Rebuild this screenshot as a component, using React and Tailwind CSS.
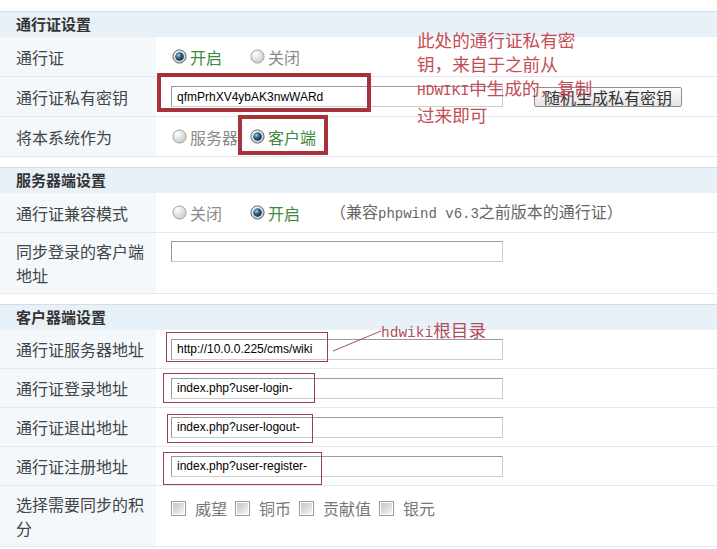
import React from "react";

// Small radio glyph in the old Windows style
function Radio({ checked }) {
  return (
    <svg width="15" height="15" viewBox="0 0 15 15" className="shrink-0">
      <defs>
        <radialGradient id="radioFace" cx="35%" cy="30%" r="75%">
          <stop offset="0%" stopColor="#ffffff" />
          <stop offset="100%" stopColor="#c9c9c9" />
        </radialGradient>
        <radialGradient id="radioDot" cx="38%" cy="35%" r="70%">
          <stop offset="0%" stopColor="#a8d0e8" />
          <stop offset="45%" stopColor="#2f6585" />
          <stop offset="100%" stopColor="#0d2a3e" />
        </radialGradient>
      </defs>
      <circle
        cx="7.5"
        cy="7.5"
        r="6.6"
        fill="url(#radioFace)"
        stroke={checked ? "#55697a" : "#a6a6a6"}
        strokeWidth="1"
      />
      {checked && <circle cx="7.5" cy="7.5" r="4.3" fill="url(#radioDot)" />}
    </svg>
  );
}

function Checkbox() {
  return (
    <svg width="15" height="15" viewBox="0 0 15 15" className="shrink-0">
      <defs>
        <linearGradient id="boxFace" x1="0" y1="0" x2="1" y2="1">
          <stop offset="0%" stopColor="#c4c4c4" />
          <stop offset="100%" stopColor="#f6f6f6" />
        </linearGradient>
      </defs>
      <rect x="0.5" y="0.5" width="14" height="14" fill="#ffffff" stroke="#9c9c9c" />
      <rect x="2" y="2" width="11" height="11" fill="url(#boxFace)" />
    </svg>
  );
}

function Option({ checked, children }) {
  return (
    <div className="flex items-center w-[78px]">
      <Radio checked={checked} />
      <span
        className={
          "ml-[3px] text-[16px] leading-[20px] " +
          (checked ? "text-[#3b8a3b]" : "text-[#8a8a8a]")
        }
      >
        {children}
      </span>
    </div>
  );
}

function TextBox({ value = "" }) {
  return (
    <input
      readOnly
      value={value}
      className="w-[332px] h-[21px] border border-[#cdcdcd] border-t-[#9a9a9a] border-l-[#9a9a9a] bg-white px-[5px] text-[12px] text-black font-['Liberation_Sans',sans-serif] outline-none"
    />
  );
}

function Header({ title }) {
  return (
    <div className="h-[26px] border-t border-[#d3dde8] bg-[#e8f0f8] flex items-center pl-[16px] text-[15px] font-bold text-[#333]">
      {title}
    </div>
  );
}

function Row({ label, height, top, children }) {
  return (
    <div className={"flex border-b border-[#e3e8ee] " + height}>
      <div className="w-[156px] shrink-0 bg-[#f4f8fb] pl-[16px] pr-[6px] flex items-center text-[16px] leading-[24px] text-[#444]">
        {label}
      </div>
      <div
        className={
          "flex-1 flex pl-[15px] " + (top ? "items-start " + top : "items-center")
        }
      >
        {children}
      </div>
    </div>
  );
}

export default function App() {
  return (
    <div className="relative w-[717px] h-[549px] overflow-hidden bg-white font-['Noto_Sans_CJK_SC',sans-serif]">
      <div className="h-[11px]" />

      {/* 通行证设置 */}
      <Header title="通行证设置" />
      <Row label="通行证" height="h-[40px]">
        <div className="flex items-center ml-[1px]">
          <Option checked>开启</Option>
          <Option>关闭</Option>
        </div>
      </Row>
      <Row label="通行证私有密钥" height="h-[40px]">
        <TextBox value="qfmPrhXV4ybAK3nwWARd" />
        <button className="ml-[31px] h-[20px] w-[148px] border border-[#8d8d8d] rounded-[2px] bg-gradient-to-b from-[#fdfdfd] to-[#e4e4e4] text-[16px] leading-none text-[#333]">
          随机生成私有密钥
        </button>
      </Row>
      <Row label="将本系统作为" height="h-[40px]">
        <div className="flex items-center ml-[1px]">
          <Option>服务器</Option>
          <Option checked>客户端</Option>
        </div>
      </Row>

      <div className="h-[10px]" />

      {/* 服务器端设置 */}
      <Header title="服务器端设置" />
      <Row label="通行证兼容模式" height="h-[40px]">
        <div className="flex items-center ml-[1px]">
          <Option>关闭</Option>
          <Option checked>开启</Option>
          <span className="ml-[2px] text-[16px] leading-[20px] text-[#666]">
            （兼容
            <span className="font-['Liberation_Mono',monospace] text-[14px]">
              phpwind v6.3
            </span>
            之前版本的通行证）
          </span>
        </div>
      </Row>
      <Row label="同步登录的客户端地址" height="h-[61px]" top="pt-[8px]">
        <TextBox />
      </Row>

      <div className="h-[10px]" />

      {/* 客户器端设置 */}
      <Header title="客户器端设置" />
      <Row label="通行证服务器地址" height="h-[39px]">
        <TextBox value="http://10.0.0.225/cms/wiki" />
      </Row>
      <Row label="通行证登录地址" height="h-[39px]">
        <TextBox value="index.php?user-login-" />
      </Row>
      <Row label="通行证退出地址" height="h-[39px]">
        <TextBox value="index.php?user-logout-" />
      </Row>
      <Row label="通行证注册地址" height="h-[39px]">
        <TextBox value="index.php?user-register-" />
      </Row>
      <Row label="选择需要同步的积分" height="h-[61px]" top="pt-[14px]">
        <div className="flex items-center gap-[8px] text-[16px] leading-[16px] text-[#777]">
          {["威望", "铜币", "贡献值", "银元"].map((t) => (
            <div key={t} className="flex items-center gap-[9px]">
              <Checkbox />
              <span>{t}</span>
            </div>
          ))}
        </div>
      </Row>

      {/* hand-drawn markup laid over the form */}
      <div className="absolute left-[157px] top-[73px] w-[214px] h-[39px] border-[4px] border-[#a8323c]" />
      <div className="absolute left-[238px] top-[115px] w-[90px] h-[40px] border-[4px] border-[#a8323c]" />

      <div className="absolute left-[166px] top-[332px] w-[162px] h-[30px] border-[1.5px] border-[#9b4050]" />
      <div className="absolute left-[163px] top-[373px] w-[152px] h-[30px] border-[1.5px] border-[#9b4050]" />
      <div className="absolute left-[167px] top-[414px] w-[146px] h-[29px] border-[1.5px] border-[#9b4050]" />
      <div className="absolute left-[163px] top-[452px] w-[159px] h-[33px] border-[1.5px] border-[#9b4050]" />

      <div className="absolute left-[417px] top-[28px] text-[17.6px] leading-[24px] text-[#c44c56]">
        <div>此处的通行证私有密</div>
        <div>钥，来自于之前从</div>
        <div>
          <span className="font-['Liberation_Mono',monospace] text-[14.5px]">HDWIKI</span>
          中生成的，复制
        </div>
        <div>过来即可</div>
      </div>

      <svg
        className="absolute left-0 top-0 pointer-events-none"
        width="717"
        height="549"
        viewBox="0 0 717 549"
      >
        <line x1="333" y1="351" x2="381" y2="331" stroke="#a4505e" strokeWidth="1" />
      </svg>
      <div className="absolute left-[381px] top-[318px] text-[17.6px] leading-[24px] text-[#b04e5a]">
        <span className="font-['Liberation_Mono',monospace] text-[14.5px]">hdwiki</span>
        根目录
      </div>
    </div>
  );
}
